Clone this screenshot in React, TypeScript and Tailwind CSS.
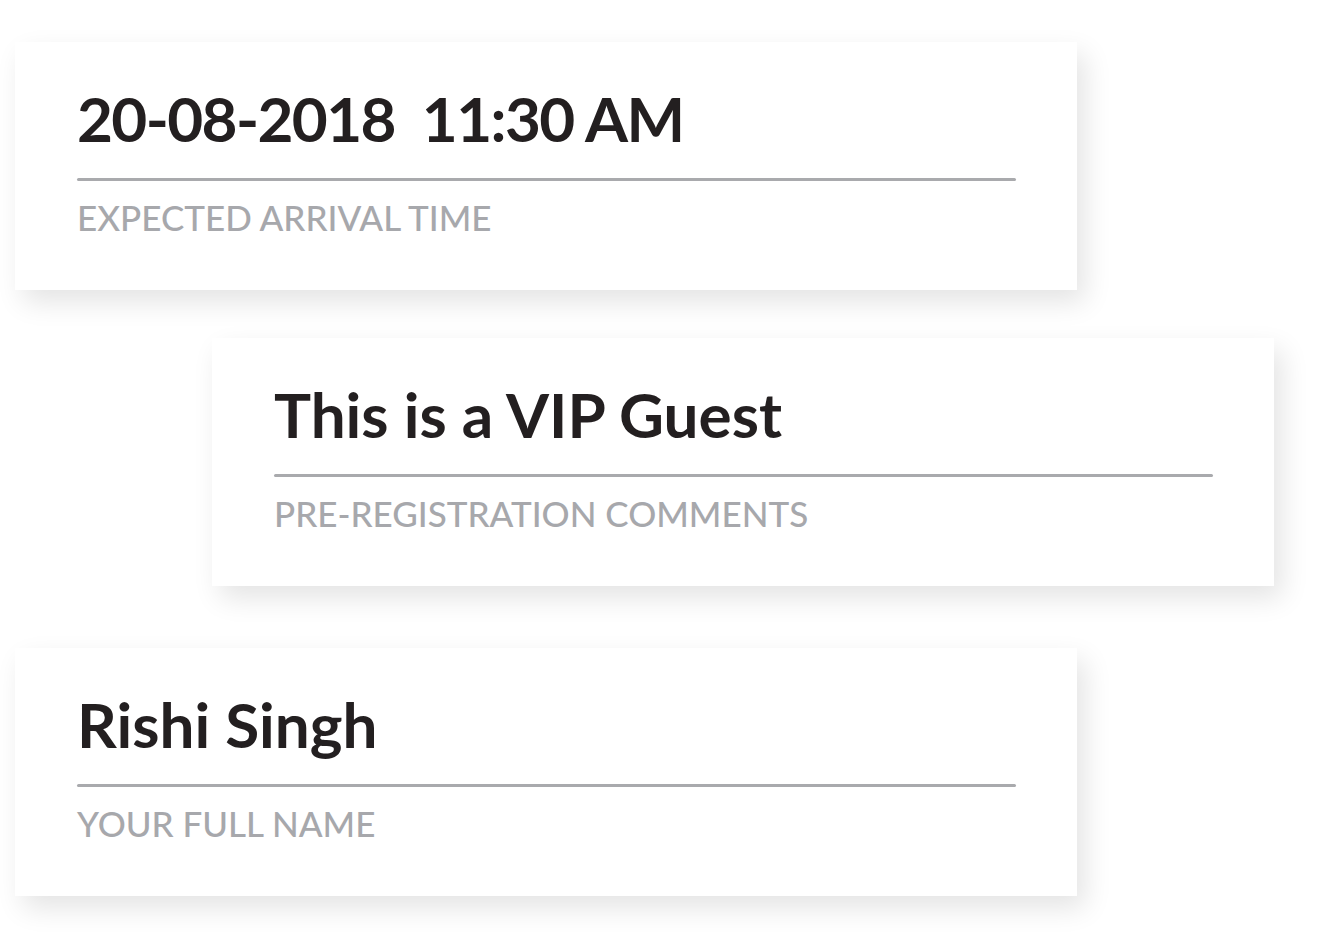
import React from 'react';

interface FieldCardProps {
  value: string;
  label: string;
  className?: string;
  valueClassName?: string;
}

const FieldCard: React.FC<FieldCardProps> = ({ value, label, className, valueClassName }) => {
  return (
    <div
      className={`w-[1062px] h-[248px] bg-white pl-[62px] pr-[61px] pt-[45px] shadow-[8px_12px_26px_rgba(0,0,0,0.11)] ${className ?? ''}`}
    >
      <div className={`text-[62px] leading-none font-bold text-[#231f20] whitespace-pre ${valueClassName ?? ''}`}>
        {value}
      </div>
      <div className="mt-[29px] h-[3px] w-full rounded-full bg-[#a9aaad]" />
      <div className="mt-[19px] text-[35px] leading-none font-medium text-[#a7a8ac] uppercase">{label}</div>
    </div>
  );
};

export default function App() {
  return (
    <div
      className="w-[1318px] h-[936px] bg-white pt-[42px] flex flex-col items-start"
      style={{ fontFamily: 'Lato, "Liberation Sans", sans-serif' }}
    >
      <FieldCard
        className="ml-[15px]"
        valueClassName="tracking-[-1.6px]"
        value="20-08-2018  11:30 AM"
        label="Expected Arrival Time"
      />
      <FieldCard className="ml-[212px] mt-[48px]" value="This is a VIP Guest" label="Pre-Registration Comments" />
      <FieldCard className="ml-[15px] mt-[62px]" value="Rishi Singh" label="Your Full Name" />
    </div>
  );
}
